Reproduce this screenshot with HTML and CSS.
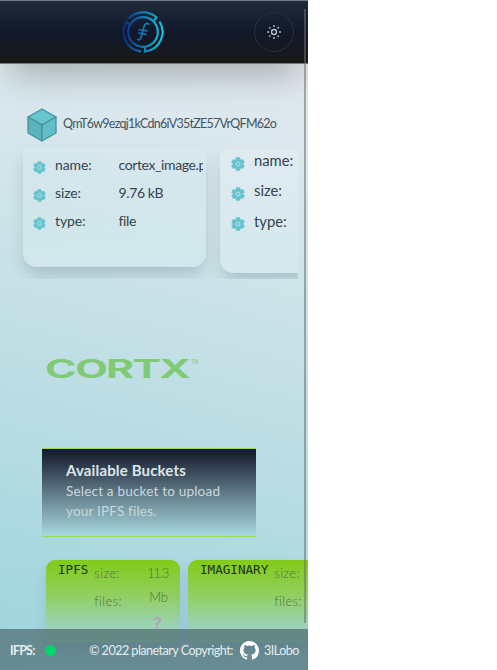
FILE: index.html
```html
<!DOCTYPE html>
<html lang="en">
<head>
<meta charset="utf-8">
<title>Cortx IPFS</title>
<link rel="stylesheet" href="styles.css">
</head>
<body>
<svg width="0" height="0" class="defs">
  <defs>
    <linearGradient id="ring" gradientUnits="userSpaceOnUse" x1="0" y1="0" x2="42" y2="0"><stop offset="0" stop-color="#0b2578"/><stop offset=".5" stop-color="#1478b4"/><stop offset="1" stop-color="#13c9dc"/></linearGradient>
    <symbol id="gear" viewBox="0 0 14 14">
      <g fill="#66c3ce"><circle cx="7" cy="7" r="5.2"/><rect x="4.8" y=".3" width="4.4" height="13.400" rx=".8"/><rect x="4.8" y=".3" width="4.4" height="13.400" rx=".8" transform="rotate(60 7 7)"/><rect x="4.8" y=".3" width="4.4" height="13.400" rx=".8" transform="rotate(120 7 7)"/></g>
      <circle cx="7" cy="7" r="2" fill="#66c3ce" stroke="#b9e2e8" stroke-width="1"/>
    </symbol>
  </defs>
</svg>
<div class="app">
  <header class="topbar">
    <svg class="logo" viewBox="0 0 42 42" fill="none" stroke="url(#ring)" stroke-width="2.2">
      <circle cx="21" cy="21" r="14.8"/>
      <path d="M6.500 7.500A20 20 0 0 1 34.5 6.500L31 11"/>
      <path d="M37.5 10.5A19.7 19.7 0 0 1 23 40.6V35.5"/>
      <path d="M19 40.6A19.7 19.7 0 0 1 4.3 11L8 14"/>
      <path stroke-width="1.7" d="M27 13.500c-1.500-2-4-1.500-5 2l-3 11c-.7 2.500-2.500 3-4 1.500M16.500 18.500l9 1.500M15.800 22l9 1.500"/>
    </svg>
    <button class="theme" aria-label="Theme">
      <svg viewBox="0 0 14 14" width="14" height="14" fill="none" stroke="#b5bac5" stroke-width="1.4"><circle cx="7" cy="7" r="2.500"/><path d="M7 0v2M7 12v2M0 7h2M12 7h2M2.200 2.200l1.200 1.200M10.600 10.600l1.200 1.200M2.200 11.800l1.200-1.200M10.600 3.400l1.200-1.200"/></svg>
    </button>
  </header>
  <main>
    <section class="files">
      <div class="hash">
        <svg class="cube" viewBox="0 0 30 34" stroke="#43929b" stroke-width="1.300" stroke-linejoin="round"><path fill="#68c5cf" d="M15 1l14 8-14 8L1 9z"/><path fill="#5cb2bd" d="M1 9l14 8v16L1 25z"/><path fill="#63bdc8" d="M29 9l-14 8v16l14-8z"/></svg>
        <span>QmT6w9ezqj1kCdn6iV35tZE57VrQFM62o</span>
      </div>
      <div class="cards">
        <article class="card">
          <div class="row"><svg><use href="#gear"/></svg><b>name:</b><span>cortex_image.p</span></div>
          <div class="row"><svg><use href="#gear"/></svg><b>size:</b><span>9.76 kB</span></div>
          <div class="row"><svg><use href="#gear"/></svg><b>type:</b><span>file</span></div>
        </article>
        <article class="card next">
          <div class="row"><svg><use href="#gear"/></svg><b>name:</b></div>
          <div class="row"><svg><use href="#gear"/></svg><b>size:</b></div>
          <div class="row"><svg><use href="#gear"/></svg><b>type:</b></div>
        </article>
      </div>
    </section>
    <svg class="cortx" viewBox="0 0 152 22"><text transform="translate(-2 19.500) scale(1.71 1)">CORTX</text><text class="tm" x="144" y="6" textLength="7" lengthAdjust="spacingAndGlyphs">TM</text></svg>
    <section class="intro">
      <h2>Available Buckets</h2>
      <p>Select a bucket to upload<br>your IPFS files.</p>
    </section>
    <section class="buckets">
      <article class="bucket"><h3>IPFS</h3><div class="keys"><span>size:</span><span>files:</span></div><div class="vals"><span>11.3</span><br>Mb<strong>?</strong></div></article>
      <article class="bucket"><h3>IMAGINARY</h3><div class="keys"><span>size:</span><span>files:</span></div></article>
    </section>
  </main>
  <footer>
    <span class="status">IFPS:</span><i class="dot"></i>
    <span class="copy">© 2022 planetary Copyright:</span>
    <svg class="github" viewBox="0 0 16 16" fill="#fff"><path d="M8 0C3.580 0 0 3.580 0 8c0 3.540 2.290 6.530 5.470 7.590.4.070.55-.17.55-.38 0-.19-.01-.82-.01-1.490-2.010.37-2.530-.49-2.690-.94-.09-.23-.48-.94-.82-1.130-.28-.15-.68-.52-.01-.53.63-.01 1.080.58 1.230.82.72 1.210 1.870.87 2.330.66.07-.52.28-.87.51-1.070-1.780-.2-3.640-.89-3.640-3.950 0-.87.31-1.590.82-2.150-.08-.2-.36-1.020.08-2.120 0 0 .67-.21 2.200.82a7.600 7.600 0 0 1 4 0c1.530-1.040 2.200-.82 2.200-.82.44 1.100.16 1.920.08 2.120.51.56.82 1.270.82 2.150 0 3.070-1.870 3.750-3.650 3.950.29.25.54.73.54 1.480 0 1.070-.01 1.930-.01 2.200 0 .21.15.46.55.38A8 8 0 0 0 16 8c0-4.420-3.580-8-8-8z"/></svg>
    <span class="author">3ILobo</span>
  </footer>
  <div class="scroll"></div>
</div>
</body>
</html>
```
FILE: styles.css
```css
* { box-sizing: border-box; }
body { margin: 0; background: #fff; font-family: Lato, sans-serif; font-weight: 300; color: #1f2937; }
.defs { position: absolute; }
.app { position: relative; width: 308px; height: 670px; overflow: hidden; background: linear-gradient(195deg, #e3e8ed 5%, #dae8ed 22%, #c4e0e6 50%, #9dd4dc 100%); }
.topbar { position: relative; height: 64px; display: grid; grid-template-columns: 122px 42px 90px 40px; align-items: center; background: linear-gradient(#202b3b, #10182a 50%, #191919); border-top: 1px solid #6d7c85; border-bottom: 1px solid #777; box-shadow: 0 20px 36px -10px rgba(0,0,0,.27); }
.logo { grid-column: 2; width: 42px; height: 42px; }
.theme { grid-column: 4; width: 40px; height: 40px; padding: 0; border: 1px solid #2b303c; border-radius: 50%; background: none; display: grid; place-items: center; }
.files { padding-top: 38px; width: 298px; height: 215px; overflow: hidden; }
.hash { display: flex; align-items: center; height: 46px; padding-left: 27px; gap: 6px; font-size: 12.5px; letter-spacing: -.74px; white-space: nowrap; }
.hash span { font-weight: 400; color: #465460; margin-top: -4px; }
.cube { width: 30px; height: 34px; }
.cards { display: flex; gap: 14px; padding-left: 23px; height: 131px; }
.card { flex: none; width: 183px; height: 119px; padding: 2px 3px 0 10px; border-radius: 0 0 14px 14px; background: linear-gradient(rgba(217,234,239,.3), #d1e7eb); box-shadow: 0 9px 16px -3px rgba(80,110,120,.32); }
.row { display: flex; align-items: center; height: 28px; font-size: 14px; overflow: hidden; white-space: nowrap; }
.row svg { flex: none; width: 13px; height: 13px; margin: 7px 9px 0 0; }
.row b { flex: 0 0 63.5px; font-weight: 400; color: #35424f; letter-spacing: -.1px; }
.row span { font-weight: 400; color: #35424f; overflow: hidden; letter-spacing: -.38px; }
.next { height: 124px; padding: 0 0 0 11px; margin-top: 1px; border-radius: 8px 0 0 14px; background: linear-gradient(#e0ebf0, #d4e8ed); }
.next .row { height: 30.5px; }
.next .row:first-child { height: 24px; margin-bottom: 3px; }
.next .row b { font-size: 14.8px; flex-basis: 43px; letter-spacing: 0; margin-top: -2px; }
.next .row svg { width: 14px; height: 14px; margin-top: 5px; }
.cortx { display: block; width: 152px; height: 22px; margin: 79px 0 0 47px; overflow: visible; }
.cortx text { font: 700 25px Inter, sans-serif; letter-spacing: -1px; fill: #80c975; }
.cortx .tm { font-size: 6px; font-weight: 400; letter-spacing: 0; }
.intro { width: 214px; height: 89px; margin: 68px 0 0 42px; padding: 11px 24px; border: solid #98dc56; border-width: 1px 0; background: linear-gradient(#11182b, #3f5060 30%, #668390 55%, #a9d8df); color: #dde6eb; }
.intro h2 { margin: 0; font-size: 15px; line-height: 21px; font-weight: 700; letter-spacing: .15px; }
.intro p { margin: 0; font-size: 13.5px; line-height: 20px; font-weight: 400; letter-spacing: .2px; white-space: nowrap; color: #cbd8de; }
.buckets { display: flex; gap: 8px; margin: 23px 0 0 46px; }
.bucket { flex: 0 0 134px; display: flex; height: 83px; padding: 0 12px; border-radius: 9px; background: linear-gradient(#81cc17, #91cf65 45%, #9bd3b4 78%, #9bd3c3); box-shadow: 0 7px 12px rgba(110,140,190,.32); font-size: 13px; color: #52723f; }
.bucket h3 { margin: 0; font: 400 12.6px/20px "DejaVu Sans Mono", monospace; color: #203217; }
.keys { margin: 0 0 0 6px; line-height: 27px; letter-spacing: .35px; }
.keys span { display: block; height: 28px; }
.vals { margin-left: auto; text-align: right; line-height: 24px; padding-top: 1px; }
.vals span { letter-spacing: -1.2px; }
.vals strong { display: block; padding-right: 6px; font: 700 17px/30px Inter, sans-serif; color: #b5a5bc; }
footer { position: absolute; left: 0; right: 0; bottom: 0; height: 41px; display: flex; align-items: center; padding: 1px 0 0 10px; background: linear-gradient(rgba(70,97,101,.65), rgba(72,100,107,.65)); color: #e5eef0; font-size: 12.5px; font-weight: 400; white-space: nowrap; }
.status { width: 35px; font-weight: 700; letter-spacing: -.8px; }
.dot { width: 11px; height: 11px; border-radius: 50%; background: #00d66b; }
.copy { width: 143px; margin: 0 8px 0 33px; font-size: 12.6px; letter-spacing: -.54px; }
.author { letter-spacing: -.5px; }
.github { width: 19px; height: 19px; margin-right: 5px; }
.scroll { position: absolute; left: 304px; top: 9px; width: 2px; height: 614px; background: rgba(110,110,110,.55); }
```
